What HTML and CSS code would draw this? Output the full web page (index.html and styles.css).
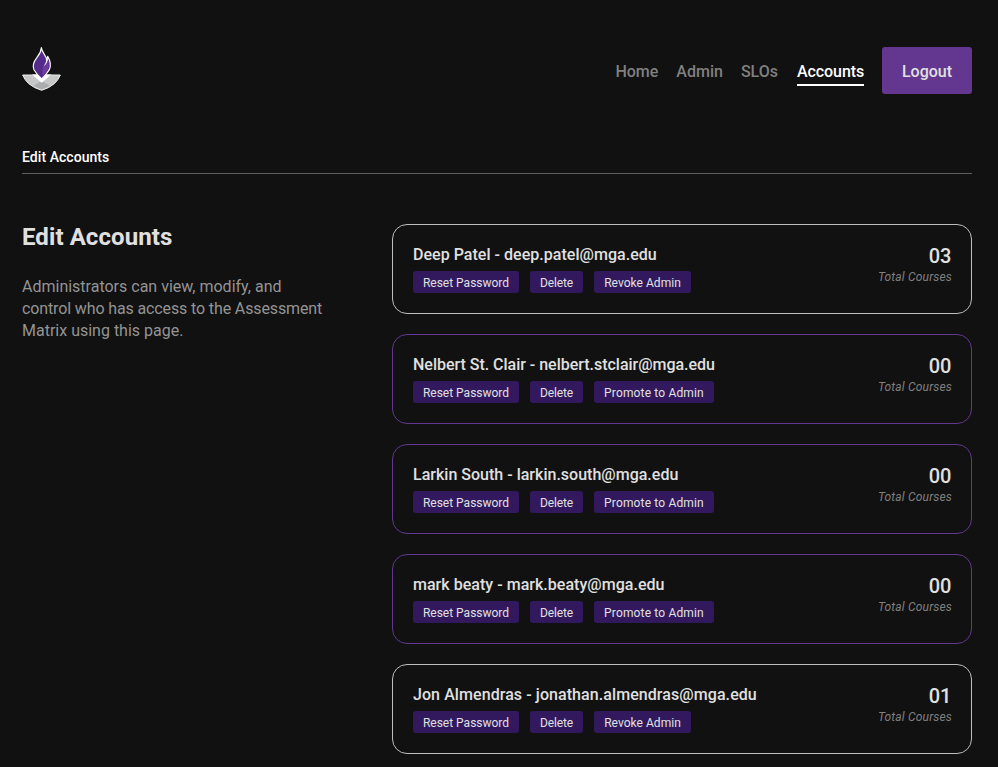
FILE: index.html
```html
<!DOCTYPE html>
<html lang="en">
<head>
<meta charset="utf-8">
<title>Edit Accounts</title>
<link rel="stylesheet" href="styles.css">
</head>
<body>
<header class="header">
  <svg class="logo" viewBox="30 21 117 132" aria-hidden="true">
    <path d="M32 105H62L89 127L116 105H145Q139 120 127 131Q112 144 89 151Q66 144 50 131Q38 120 32 105Z" fill="#c6c8c8" stroke="#ececec" stroke-width="3"/>
    <path d="M89 122L113 137Q102 144 89 148Q76 144 65 137Z" fill="#a9adae"/>
    <path d="M60 103H118L89 128Z" fill="#fff"/>
    <path d="M88 23C90 39 104 47 104 61L107 49C115 62 118 75 112 89Q103 104 89 117Q74 103 66 89C60 76 65 65 75 52Q87 38 88 23Z" fill="#542a8a" stroke="#fff" stroke-width="3.5" stroke-linejoin="round"/>
    <path d="M100 53C103 65 96 74 92 84Q88 97 92 111Q103 99 109 86C112 76 110 67 108 59Q107 70 99 79Q103 66 100 53Z" fill="#6c3c9b"/>
    <path d="M104 59Q101 70 95 79Q107 70 108 54Z" fill="#fff"/>
  </svg>
  <nav class="nav">
    <a class="nav-link">Home</a>
    <a class="nav-link">Admin</a>
    <a class="nav-link">SLOs</a>
    <a class="nav-link active">Accounts</a>
    <button class="logout">Logout</button>
  </nav>
</header>
<div class="tabs"><a class="tab">Edit Accounts</a></div>
<main class="content">
  <section class="intro">
    <h1>Edit Accounts</h1>
    <p>Administrators can view, modify, and <span class="snug">control who has access to the Assessment</span> Matrix using this page.</p>
  </section>
  <section class="accounts">
    <article class="card admin">
      <div><h2>Deep Patel - deep.patel@mga.edu</h2>
        <div class="actions"><button class="reset">Reset Password</button><button class="delete">Delete</button><button class="revoke">Revoke Admin</button></div></div>
      <div class="total"><strong>03</strong><em>Total Courses</em></div>
    </article>
    <article class="card">
      <div><h2 class="compact">Nelbert St. Clair - nelbert.stclair@mga.edu</h2>
        <div class="actions"><button class="reset">Reset Password</button><button class="delete">Delete</button><button class="promote">Promote to Admin</button></div></div>
      <div class="total"><strong>00</strong><em>Total Courses</em></div>
    </article>
    <article class="card">
      <div><h2 class="regular">Larkin South - larkin.south@mga.edu</h2>
        <div class="actions"><button class="reset">Reset Password</button><button class="delete">Delete</button><button class="promote">Promote to Admin</button></div></div>
      <div class="total"><strong>00</strong><em>Total Courses</em></div>
    </article>
    <article class="card">
      <div><h2>mark beaty - mark.beaty@mga.edu</h2>
        <div class="actions"><button class="reset">Reset Password</button><button class="delete">Delete</button><button class="promote">Promote to Admin</button></div></div>
      <div class="total"><strong>00</strong><em>Total Courses</em></div>
    </article>
    <article class="card admin">
      <div><h2 class="wide">Jon Almendras - jonathan.almendras@mga.edu</h2>
        <div class="actions"><button class="reset">Reset Password</button><button class="delete">Delete</button><button class="revoke">Revoke Admin</button></div></div>
      <div class="total"><strong>01</strong><em>Total Courses</em></div>
    </article>
  </section>
</main>
</body>
</html>
```
FILE: styles.css
```css
* { box-sizing: border-box; }
body {
  margin: 0;
  padding: 47px 26px 13px 22px;
  background: #111;
  color: #e0e0e0;
  font-family: Roboto, sans-serif;
  font-size: 16px;
}
h1, h2, p { margin: 0; }
button { border: 0; font-family: inherit; color: #e0e0e0; white-space: nowrap; }
.header { display: flex; justify-content: space-between; align-items: flex-start; height: 47px; }
.logo { width: 39px; height: 44px; }
.nav { display: flex; align-items: center; gap: 18px; height: 47px; }
.nav-link { margin-top: 3px; font-weight: 500; line-height: 22px; color: #808080; padding: 2px 0 1px; border-bottom: 2px solid transparent; }
.nav-link.active { width: 67px; margin-left: 1px; letter-spacing: -0.08px; color: #fff; border-bottom-color: #fff; }
.logout { width: 90px; height: 47px; padding: 2px 0 0; border-radius: 3px; background: #63378f; font-size: 16px; font-weight: 500; line-height: 22px; }
.tabs { margin-top: 53px; height: 27px; border-bottom: 1px solid #5e5e5e; }
.tab { display: block; color: #fff; font-size: 14px; font-weight: 500; line-height: 20px; letter-spacing: 0.05px; }
.content { display: grid; grid-template-columns: 310px 580px; column-gap: 60px; margin-top: 50px; }
h1 { font-size: 24px; font-weight: 700; line-height: 26px; letter-spacing: 0.08px; }
.intro p { margin-top: 26px; color: #949494; line-height: 22px; }
.snug { letter-spacing: -0.125px; }
.accounts { display: grid; gap: 20px; align-content: start; }
.card { display: flex; justify-content: space-between; height: 90px; padding: 20px; border: 1px solid #63378f; border-radius: 15px; }
.card.admin { border-color: #bdbdbd; }
h2 { font-size: 16px; font-weight: 500; line-height: 20px; letter-spacing: 0.03px; }
h2.compact { letter-spacing: -0.02px; }
h2.regular { letter-spacing: 0.01px; }
h2.wide { letter-spacing: 0.075px; }
.actions { display: flex; gap: 11px; margin-top: 6px; }
.actions button { height: 22px; padding: 2px 0 0; border-radius: 3px; background: #32195e; font-size: 12px; line-height: 20px; }
.actions .reset { width: 106px; }
.actions .delete { width: 53px; letter-spacing: -0.1px; }
.actions .revoke { width: 97px; letter-spacing: 0.04px; }
.actions .promote { width: 120px; letter-spacing: 0.16px; }
.total { display: flex; flex-direction: column; align-items: flex-end; }
.total strong { font-size: 20px; font-weight: 500; line-height: 22px; letter-spacing: -0.3px; }
.total em { margin-right: -1px; color: #808080; font-size: 12px; line-height: 20px; letter-spacing: 0.18px; }
```
